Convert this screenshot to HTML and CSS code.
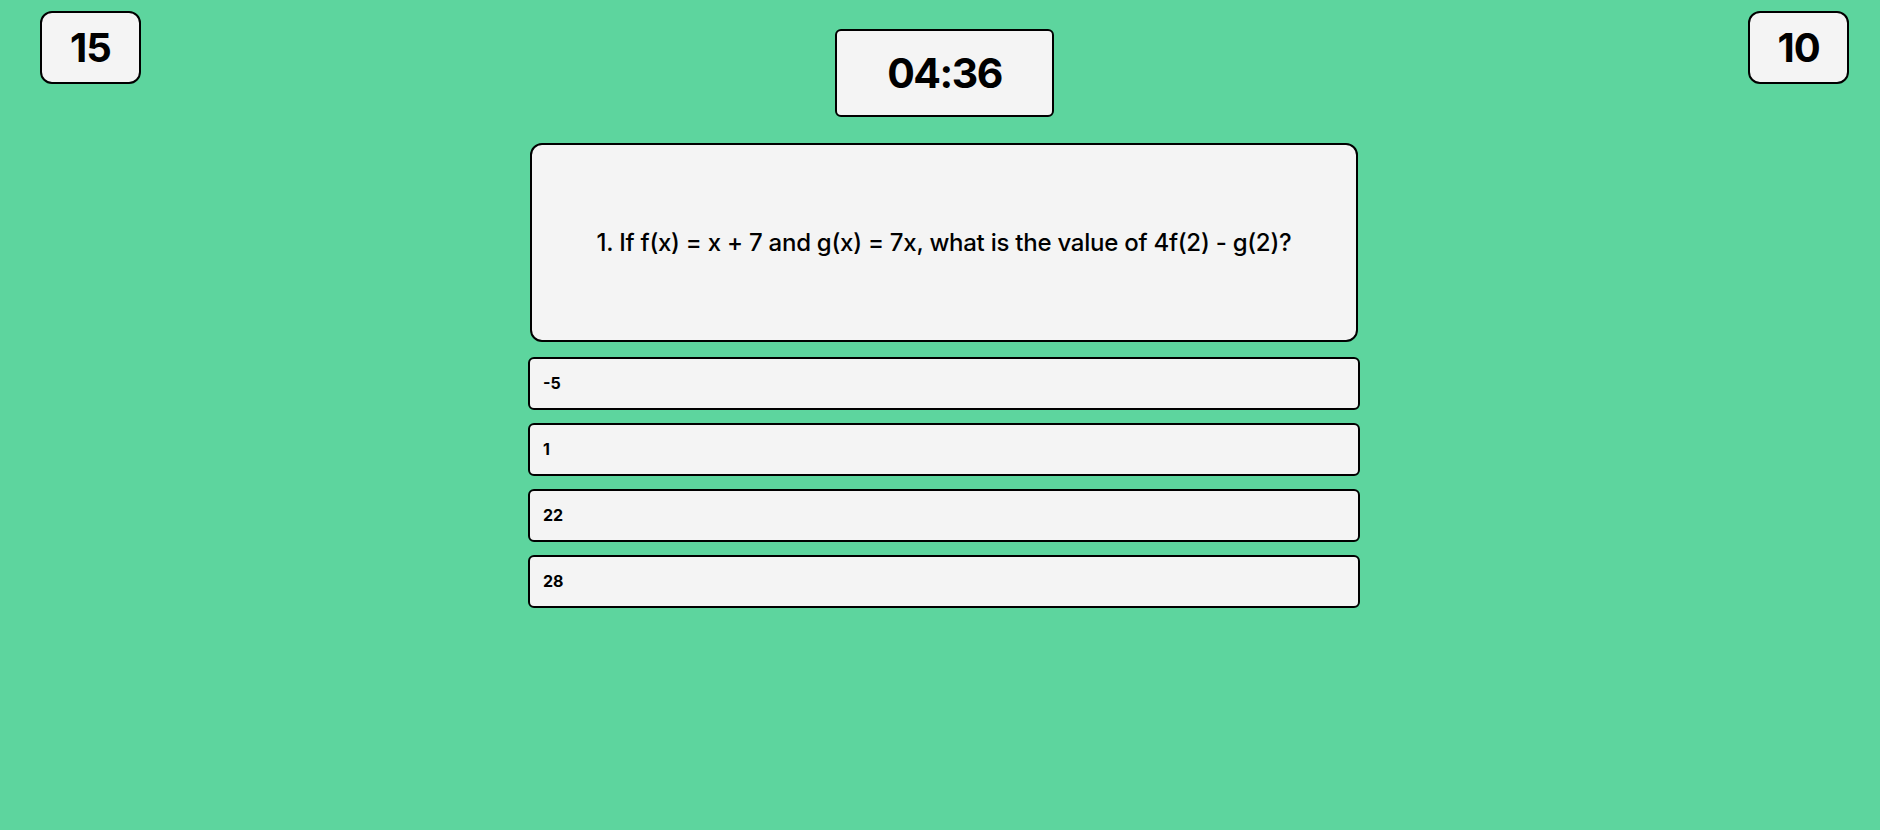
FILE: index.html
```html
<!DOCTYPE html>
<html lang="en">
<head>
<meta charset="utf-8">
<title>Quiz</title>
<link rel="stylesheet" href="styles.css">
</head>
<body>
  <header class="topbar">
    <div class="score score-left">15</div>
    <div class="timer">04:36</div>
    <div class="score score-right">10</div>
  </header>
  <main class="quiz">
    <section class="question">
      <p>1. If f(x) = x + 7 and g(x) = 7x, what is the value of 4f(2) - g(2)?</p>
    </section>
    <ul class="options">
      <li class="option">-5</li>
      <li class="option">1</li>
      <li class="option">22</li>
      <li class="option">28</li>
    </ul>
  </main>
</body>
</html>
```

FILE: styles.css
```css
* { box-sizing: border-box; }

html, body {
  margin: 0;
  padding: 0;
}

body {
  background: #5dd59e;
  font-family: Inter, "Noto Sans", "Liberation Sans", sans-serif;
  color: #000;
  height: 830px;
  overflow: hidden;
}

.topbar {
  display: flex;
  justify-content: space-between;
  align-items: flex-start;
  padding-top: 11px;
}

.score {
  width: 101px;
  height: 73px;
  background: #f4f4f4;
  border: 2px solid #000;
  border-radius: 12px;
  display: flex;
  align-items: center;
  justify-content: center;
  font-size: 40px;
  font-weight: 700;
  letter-spacing: -1px;
}

.score-left { margin-left: 40px; }
.score-right { margin-right: 31px; }

.timer {
  margin-top: 18px;
  width: 219px;
  height: 88px;
  background: #f4f4f4;
  border: 2px solid #000;
  border-radius: 6px;
  display: flex;
  align-items: center;
  justify-content: center;
  font-size: 41px;
  font-weight: 700;
  letter-spacing: -1.5px;
}

.quiz {
  display: flex;
  flex-direction: column;
  align-items: center;
  padding-left: 8px;
  margin-top: 26px;
}

.question {
  width: 828px;
  height: 199px;
  background: #f4f4f4;
  border: 2px solid #000;
  border-radius: 12px;
  display: flex;
  align-items: center;
  justify-content: center;
}

.question p {
  margin: 0;
  font-size: 24px;
  font-weight: 500;
  letter-spacing: -0.25px;
}

.options {
  list-style: none;
  margin: 15px 0 0;
  padding: 0;
  width: 832px;
  display: flex;
  flex-direction: column;
  gap: 13px;
}

.option {
  height: 53px;
  background: #f4f4f4;
  border: 2px solid #000;
  border-radius: 6px;
  display: flex;
  align-items: center;
  padding-left: 13px;
  padding-bottom: 2px;
  font-size: 16px;
  font-weight: 700;
}
```
